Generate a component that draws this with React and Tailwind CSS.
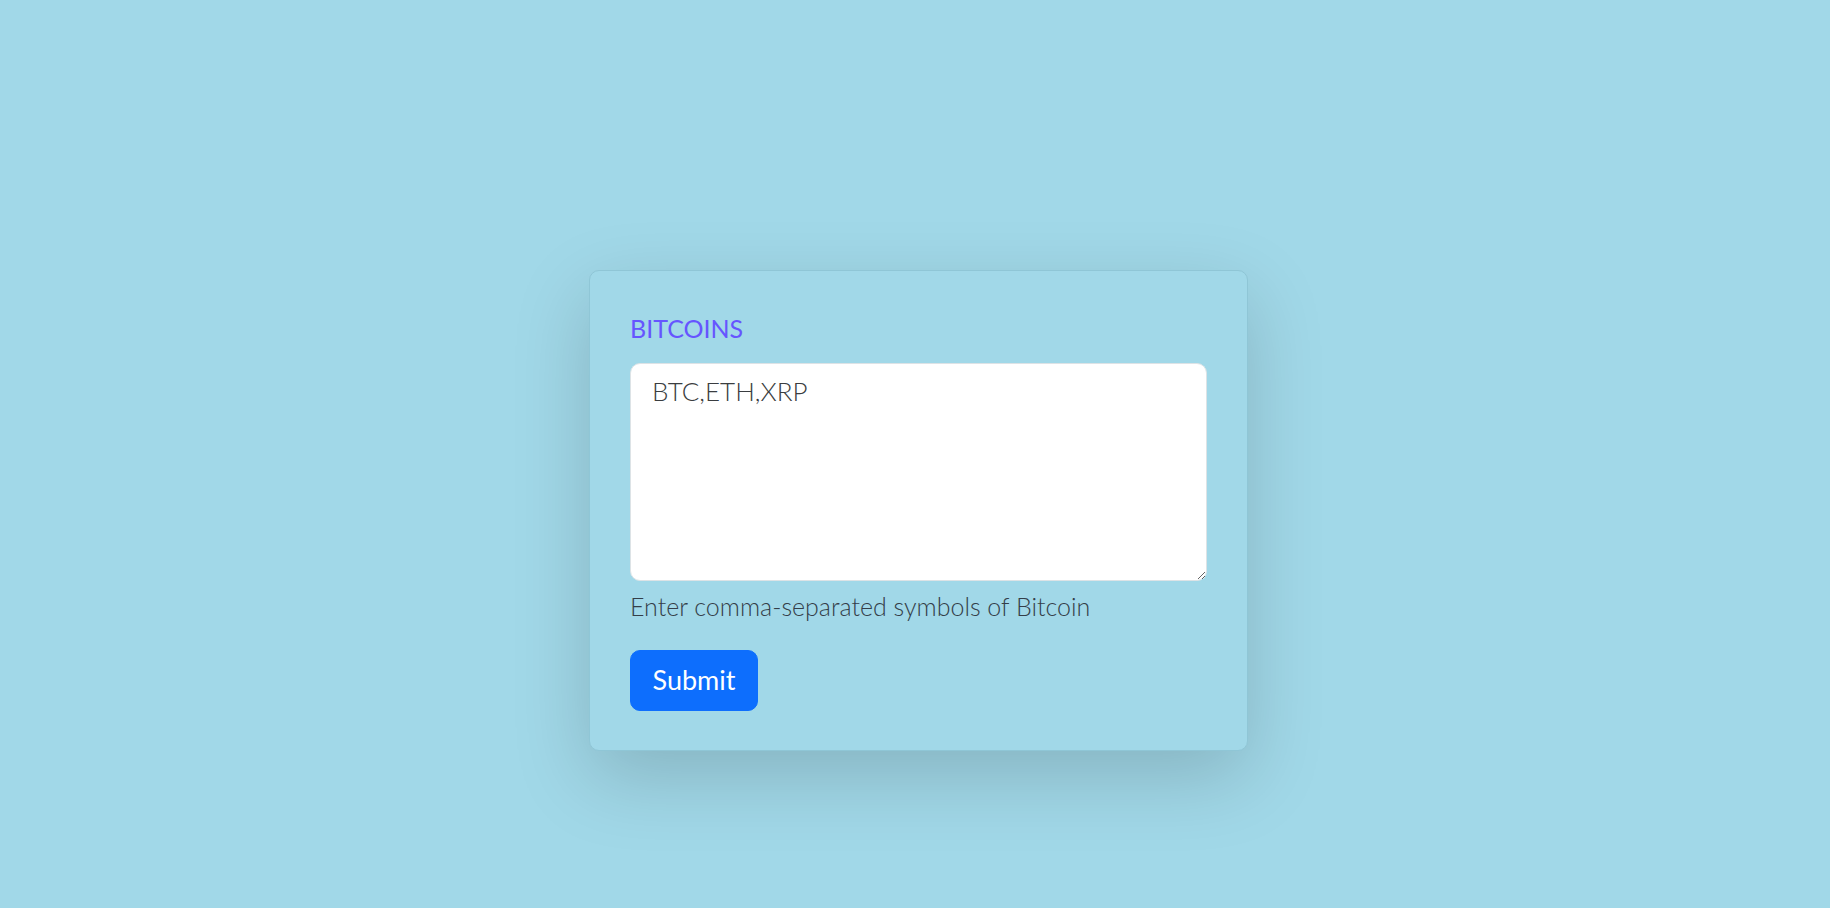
import React, { useState } from 'react';

const App = () => {
  const [symbols, setSymbols] = useState('BTC,ETH,XRP');

  return (
    <div className="min-h-[908px] w-full bg-[#a1d8e8] font-[Lato,'Noto_Sans',sans-serif]">
      <div className="flex justify-center pl-[7px] pt-[270px]">
        <form
          onSubmit={(e) => e.preventDefault()}
          className="w-[659px] h-[481px] rounded-[10px] border border-[#8fc6d6] bg-[#a1d8e8] px-[40px] pt-[42px] shadow-[0_26px_77px_rgba(0,0,0,0.17)]"
        >
          <label htmlFor="symbols" className="block text-[25px] leading-[30px] text-[#6655ff]">
            BITCOINS
          </label>
          <textarea
            id="symbols"
            value={symbols}
            onChange={(e) => setSymbols(e.target.value)}
            className="mt-[20px] block w-[577px] h-[218px] rounded-[10px] border border-[#dde3e6] bg-white px-[21px] py-[8px] text-[26px] font-light leading-[38px] text-[#3a3d40] outline-none"
          />
          <p className="mt-[6px] text-[25px] font-light leading-[38px] text-[#343e48]">
            Enter comma-separated symbols of Bitcoin
          </p>
          <button
            type="submit"
            className="mt-[25px] h-[61px] w-[128px] rounded-[10px] border border-[#0d6efd] bg-[#0d6efd] text-[27px] text-white"
          >
            Submit
          </button>
        </form>
      </div>
    </div>
  );
};

export default App;
